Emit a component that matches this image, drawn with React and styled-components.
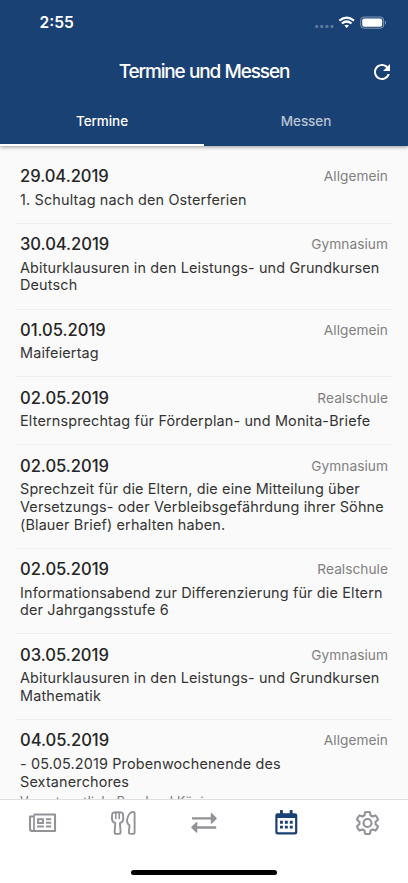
import React from "react";
import styled, { createGlobalStyle } from "styled-components";

const Global = createGlobalStyle`
  * { box-sizing: border-box; }
  html, body { margin: 0; padding: 0; overflow: hidden; }
  body { font-family: Inter, "Liberation Sans", sans-serif; }
`;

const Screen = styled.div`
  width: 408px;
  height: 883px;
  display: flex;
  flex-direction: column;
  overflow: hidden;
  background: #fafafa;
`;

const Header = styled.header`
  flex: none;
  height: 146px;
  display: flex;
  flex-direction: column;
  background: #1a4173;
  color: #fff;
  box-shadow: 0 1px 4px rgba(0, 0, 0, 0.4);
  z-index: 1;
`;

const StatusBar = styled.div`
  height: 44px;
  display: flex;
  align-items: center;
  justify-content: space-between;
  padding: 2px 22px 0 39.5px;
`;

const Clock = styled.span`
  font-size: 15.6px;
  line-height: 20px;
  font-weight: 600;
`;

const StatusIcons = styled.svg`
  width: 72px;
  height: 14px;
  display: block;
`;

const TitleBar = styled.div`
  height: 55px;
  display: grid;
  grid-template-columns: 52px 1fr 52px;
  align-items: center;
`;

const Title = styled.h1`
  margin: 0;
  text-align: center;
  font-size: 19px;
  line-height: 24px;
  font-weight: 500;
  letter-spacing: -1.15px;
  word-spacing: 0.5px;
  white-space: nowrap;
`;

const RefreshButton = styled.button`
  border: 0;
  padding: 0;
  background: none;
  color: #fff;
  display: flex;
  justify-content: center;
  svg { width: 24px; height: 24px; }
`;

const Tabs = styled.nav`
  flex: 1;
  display: grid;
  grid-template-columns: 1fr 1fr;
`;

const Tab = styled.button`
  border: 0;
  border-bottom: 2px solid ${(p) => (p.$active ? "#fff" : "transparent")};
  background: none;
  padding: 0 0 1px;
  font: 500 13.5px/18px Inter, "Liberation Sans", sans-serif;
  letter-spacing: -0.08px;
  color: ${(p) => (p.$active ? "#fff" : "rgba(255,255,255,0.7)")};
`;

const List = styled.main`
  flex: 1;
  min-height: 0;
  overflow: hidden;
  padding: 9.9px 15px 0;
`;

const Entry = styled.article`
  padding: 10.1px 5px 14.55px;
  border-bottom: 1px solid #eeeeee;
`;

const EntryHead = styled.div`
  height: 20px;
  display: flex;
  align-items: center;
  justify-content: space-between;
  margin-bottom: 4.6px;
`;

const DateLabel = styled.h2`
  margin: 0;
  font-size: 16.6px;
  line-height: 20px;
  font-weight: 500;
  letter-spacing: -0.04px;
  color: #262626;
`;

const Category = styled.span`
  font-size: 13.7px;
  line-height: 18px;
  letter-spacing: 0.04px;
  color: #808080;
`;

const Description = styled.p`
  margin: 0;
  font-size: 14.4px;
  line-height: 17.72px;
  letter-spacing: 0.16px;
  color: #343434;
  white-space: pre;
`;

const Note = styled.p`
  margin: 4px 0 0;
  font-size: 12.5px;
  line-height: 15px;
  letter-spacing: 0.25px;
  color: #777;
`;

const Footer = styled.footer`
  flex: none;
  height: 84px;
  display: flex;
  flex-direction: column;
  align-items: center;
  justify-content: space-between;
  padding-bottom: 8px;
  border-top: 1px solid #dfdfe0;
  background: #fff;
  z-index: 1;
`;

const NavBar = styled.nav`
  width: 100%;
  height: 46px;
  display: grid;
  grid-template-columns: repeat(5, 1fr);
  padding: 0 0.5px 0 1px;
`;

const NavItem = styled.button`
  border: 0;
  padding: 0;
  background: none;
  display: flex;
  align-items: center;
  justify-content: center;
  color: ${(p) => (p.$active ? "#1a4173" : "#929297")};
  svg { width: 30px; height: 28px; display: block; overflow: visible; }
`;

const HomeIndicator = styled.div`
  width: 146px;
  height: 5px;
  border-radius: 3px;
  background: #000;
`;

const NewsIcon = () => (
  <svg viewBox="-1 0 30 28" fill="none" stroke="currentColor" strokeWidth="2.1">
    <path d="M6 5.500h21v16.500H4.200Q2 22 2 19.800V7.500h4" strokeLinejoin="round" />
    <path d="M6 5.500v14.500q0 2-1.800 2" strokeWidth="1.7" />
    <path d="M10 10.200h5v3.800h-5zM17.900 10.200h5.300M17.900 13.800h5.300M9.100 17.500h6.800M17.900 17.500h5.300" strokeWidth="1.9" />
  </svg>
);

const FoodIcon = () => (
  <svg viewBox="-1 0 30 28" fill="none" stroke="currentColor" strokeWidth="1.9" strokeLinejoin="round" strokeLinecap="round">
    <path d="M5.400 3.500Q3.400 3.500 3.200 5.200L2.900 9.400q0 3.400 3.400 4.800l-.7 8.700q0 2 1.800 2h2.400q1.800 0 1.800-2l-.7-8.700q3.400-1.400 3.400-4.800L14 5.200q-.2-1.700-2.200-1.700Q10.700 2.800 9.700 3.600 8.500 2.800 7.400 3.600 6.400 2.800 5.400 3.500z" />
    <path d="M6.800 4.500v5M10.200 4.500v5" strokeWidth="1.6" />
    <path d="M25.600 4.300v18.700q0 1.900-1.800 1.900h-2.100q-1.900 0-1.800-1.900l.6-6.700q-3.100-2.200-2.300-6.200.8-4.100 3-6 1.700-1.300 3.500-1.200.9.100.9 1.400z" />
  </svg>
);

const TransferIcon = () => (
  <svg viewBox="0 0 30 28" fill="currentColor">
    <path d="M3 8.200h18.800V4.700q0-1.400 1.100-.5l4.400 4.200q1.100.9 0 1.800l-4.400 4.200q-1.100.9-1.100-.5v-3.300H3z" />
    <path d="M27.200 17.300H8.300v-3.500q0-1.400-1.100-.5l-4.500 4.200q-1.100.9 0 1.800l4.500 4.200q1.100.9 1.100-.5v-3.300h18.900z" />
  </svg>
);

const CalendarIcon = () => (
  <svg viewBox="-0.300 0.300 30 28" fill="currentColor">
    <path fillRule="evenodd" d="M6.300 4.600h2.400V2q0-.7.7-.7h1.500q.7 0 .7.7v2.600h6.800V2q0-.7.7-.7h1.500q.7 0 .7.7v2.600h2.400q2.300 0 2.300 2.300v16.600q0 2.300-2.300 2.300H6.300Q4 25.800 4 23.500V6.900q0-2.300 2.300-2.300zM6.200 9.300v13.600q0 .7.700.7h16.200q.7 0 .7-.7V9.300z" />
    <path d="M8.700 12.100h2.900v2.900H8.700zm4.900 0h2.900v2.900h-2.900zm4.900 0h2.900v2.900h-2.900zM8.700 17h2.900v2.900H8.700zm4.900 0h2.900v2.900h-2.900zm4.900 0h2.900v2.900h-2.900z" />
  </svg>
);

const GearIcon = () => (
  <svg viewBox="-0.500 0 30 28" fill="none" stroke="currentColor" strokeWidth="2.1" strokeLinejoin="round">
    <path d="M12.500 3.300Q15 2.700 17.500 3.300l.5 3 2.100 1.200L23 6.400q1.700 1.900 2.500 4.300l-2.400 2v2.600l2.400 2q-.8 2.400-2.500 4.300l-2.900-1.100-2.100 1.200-.5 3q-2.500.6-5 0l-.5-3-2.100-1.200L7 21.600q-1.700-1.900-2.500-4.300l2.400-2v-2.600l-2.400-2Q5.300 8.300 7 6.400l2.900 1.100L12 6.300z" />
    <circle cx="15" cy="14" r="4" />
  </svg>
);

const navItems = [
  { id: "Nachrichten", Icon: NewsIcon },
  { id: "Mensa", Icon: FoodIcon },
  { id: "Vertretung", Icon: TransferIcon },
  { id: "Termine", Icon: CalendarIcon, active: true },
  { id: "Einstellungen", Icon: GearIcon },
];

const entries = [
  { date: "29.04.2019", category: "Allgemein", text: "1. Schultag nach den Osterferien" },
  { date: "30.04.2019", category: "Gymnasium", text: "Abiturklausuren in den Leistungs- und Grundkursen\nDeutsch" },
  { date: "01.05.2019", category: "Allgemein", text: "Maifeiertag" },
  { date: "02.05.2019", category: "Realschule", text: "Elternsprechtag für Förderplan- und Monita-Briefe" },
  { date: "02.05.2019", category: "Gymnasium", text: "Sprechzeit für die Eltern, die eine Mitteilung über\nVersetzungs- oder Verbleibsgefährdung ihrer Söhne\n(Blauer Brief) erhalten haben." },
  { date: "02.05.2019", category: "Realschule", text: "Informationsabend zur Differenzierung für die Eltern\nder Jahrgangsstufe 6" },
  { date: "03.05.2019", category: "Gymnasium", text: "Abiturklausuren in den Leistungs- und Grundkursen\nMathematik" },
  { date: "04.05.2019", category: "Allgemein", text: "- 05.05.2019 Probenwochenende des\nSextanerchores", note: "Verantwortlich: Bernhard König" },
];

export default function App() {
  return (
    <Screen>
      <Global />
      <Header>
        <StatusBar>
          <Clock>2:55</Clock>
          <StatusIcons viewBox="0 0 72 14" fill="#fff">
            <g opacity="0.28">
              <circle cx="2.700" cy="10.500" r="1.700" />
              <circle cx="7.800" cy="10.500" r="1.700" />
              <circle cx="12.900" cy="10.500" r="1.700" />
              <circle cx="18" cy="10.500" r="1.700" />
            </g>
            <path d="M32.700 11.900l-2.300-2.300q2.300-1.800 4.600 0z" />
            <path d="M27.900 7.500q4.800-4 9.600 0M25.400 4.700q7.300-6 14.600 0" fill="none" stroke="#fff" strokeWidth="2.200" />
            <rect x="46.700" y="1" width="23" height="11.200" rx="3.300" fill="none" stroke="#fff" strokeOpacity="0.45" />
            <rect x="48.200" y="2.500" width="20" height="8.200" rx="2" />
            <path d="M71 4.700q2 1.900 0 3.900z" opacity="0.5" />
          </StatusIcons>
        </StatusBar>
        <TitleBar>
          <span />
          <Title>Termine und Messen</Title>
          <RefreshButton aria-label="Aktualisieren">
            <svg viewBox="0 0 24 24" fill="currentColor">
              <path d="M17.650 6.350C16.200 4.900 14.210 4 12 4c-4.420 0-7.990 3.580-7.990 8s3.570 8 7.990 8c3.730 0 6.840-2.550 7.730-6h-2.080c-.82 2.330-3.040 4-5.650 4-3.310 0-6-2.690-6-6s2.690-6 6-6c1.660 0 3.140.69 4.220 1.780L13 11h7V4z" />
            </svg>
          </RefreshButton>
        </TitleBar>
        <Tabs>
          <Tab $active>Termine</Tab>
          <Tab>Messen</Tab>
        </Tabs>
      </Header>
      <List>
        {entries.map((e, i) => (
          <Entry key={i}>
            <EntryHead>
              <DateLabel>{e.date}</DateLabel>
              <Category>{e.category}</Category>
            </EntryHead>
            <Description>{e.text}</Description>
            {e.note && <Note>{e.note}</Note>}
          </Entry>
        ))}
      </List>
      <Footer>
        <NavBar>
          {navItems.map(({ id, Icon, active }) => (
            <NavItem key={id} $active={active} aria-label={id}>
              <Icon />
            </NavItem>
          ))}
        </NavBar>
        <HomeIndicator />
      </Footer>
    </Screen>
  );
}
